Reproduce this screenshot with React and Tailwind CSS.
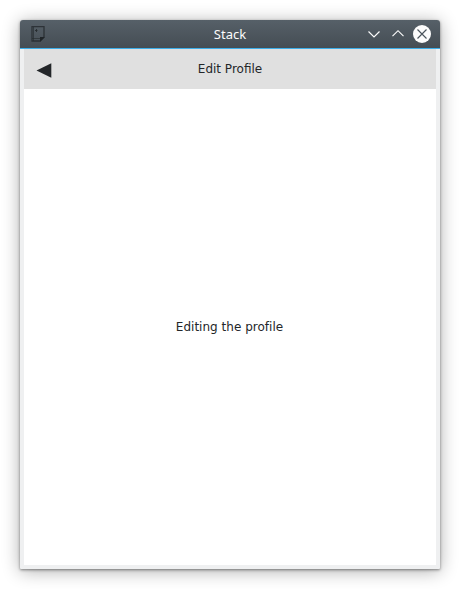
function AppIcon() {
  return (
    <svg width="14" height="16" viewBox="0 0 14 16" fill="none" className="ml-[11px]">
      <path d="M1 .7h12v10.300L9 15H1z" stroke="#272c30" strokeOpacity=".85" strokeWidth="1.300" />
      <path d="M2.500 1v14M1 12.500h8" stroke="#272c30" strokeOpacity=".65" />
      <path d="M4 4.500h2.500M5.500 3v3" stroke="#272c30" strokeOpacity=".9" />
      <path d="M9 11h5L9 16z" fill="#202528" />
    </svg>
  );
}

function TitleBar() {
  return (
    <header className="grid h-[29px] shrink-0 grid-cols-[1fr_auto_1fr] items-center rounded-t-[3px] border-b border-[#3daee9] bg-linear-to-b from-[#566068] to-[#454d54]">
      <AppIcon />
      <h1 className="font-['Noto_Sans',sans-serif] text-[13px] leading-7 text-[#fcfcfc]">Stack</h1>
      <div className="flex items-center justify-end pr-[7px]">
        <svg width="66" height="18" viewBox="0 0 66 18" fill="none">
          <path d="M1.5 6.500L7 12l5.500-5.500M25.500 11.200L31 5.700l5.500 5.500" stroke="#fcfcfc" strokeWidth="1.150" />
          <circle cx="55" cy="9" r="9" fill="#fcfcfc" />
          <path d="M50.500 4.500l9 9M59.500 4.500l-9 9" stroke="#4b545c" strokeWidth="1.150" />
        </svg>
      </div>
    </header>
  );
}

export default function App() {
  return (
    <div className="h-[589px] w-[460px] overflow-hidden bg-white px-5 pt-5 font-['DejaVu_Sans',sans-serif] text-[12px] text-[#232629]">
      <div className="flex h-[549px] flex-col rounded-t-[3px] rounded-b-[1px] bg-[#eff0f1] shadow-[0_1px_3px_rgba(0,0,0,0.45),0_2px_18px_rgba(0,0,0,0.32)]">
        <TitleBar />
        <main className="mx-1 mb-1 flex min-h-0 flex-1 flex-col bg-white">
          <nav className="grid h-10 shrink-0 grid-cols-[1fr_auto_1fr] items-center bg-[#e0e0e0]">
            <button aria-label="Back" className="ml-3 w-4 pt-[2px]">
              <svg width="16" height="16" viewBox="0 0 16 16">
                <path d="M.5 8.500L15.300 1.300v14.400z" fill="#232629" />
              </svg>
            </button>
            <h2>Edit Profile</h2>
          </nav>
          <section className="flex flex-1 items-center justify-center">
            <p className="pr-px tracking-[0.02px]">Editing the profile</p>
          </section>
        </main>
      </div>
    </div>
  );
}
